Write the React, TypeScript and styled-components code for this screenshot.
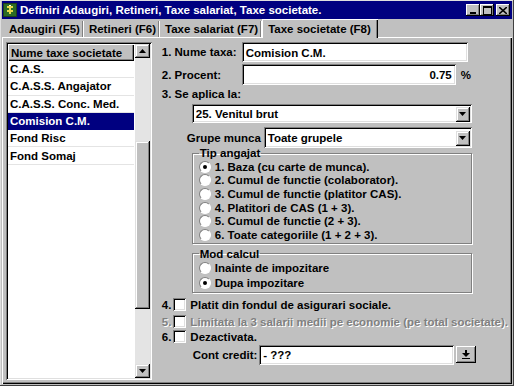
import React from "react";
import styled, { createGlobalStyle } from "styled-components";

const GlobalStyle = createGlobalStyle`
  html, body {
    margin: 0;
    padding: 0;
    background: #c0c0c0;
  }
  body {
    font-family: "Liberation Sans", Arial, sans-serif;
    font-size: 11.5px;
    font-weight: bold;
    color: #000;
  }
`;

const Window = styled.div`
  width: 514px;
  height: 386px;
  box-sizing: border-box;
  background: #c0c0c0;
  padding: 1px 2px 2px;
  display: flex;
  flex-direction: column;
  box-shadow: inset -1px -1px #404040, inset 1px 1px #dfdfdf;
`;

const TitleBar = styled.div`
  height: 18px;
  flex: none;
  background: #000080;
  color: #fff;
  display: flex;
  align-items: center;
  padding: 0 2px 0 1px;
  gap: 3px;
`;

const TitleText = styled.div`
  flex: 1;
  white-space: nowrap;
`;

const TitleButtons = styled.div`
  display: flex;
  align-items: center;
`;

const CaptionButton = styled.div<{ gapLeft?: number }>`
  width: 14px;
  height: 12px;
  margin-left: ${(p) => p.gapLeft ?? 0}px;
  background: #c0c0c0;
  box-shadow: inset -1px -1px #000, inset 1px 1px #fff, inset -2px -2px #808080;
  display: flex;
  align-items: center;
  justify-content: center;
`;

const TabRow = styled.div`
  height: 18px;
  flex: none;
  display: flex;
  align-items: flex-end;
  padding-left: 2px;
`;

const Tab = styled.div<{ active?: boolean }>`
  height: ${(p) => (p.active ? 19 : 16)}px;
  box-sizing: border-box;
  display: flex;
  align-items: center;
  padding: ${(p) => (p.active ? "0 7px 0 6px" : "0 4px 0 5px")};
  white-space: nowrap;
  position: relative;
  z-index: ${(p) => (p.active ? 1 : 0)};
  margin-bottom: ${(p) => (p.active ? -1 : 0)}px;
  background: #c0c0c0;
  box-shadow: ${(p) =>
    p.active
      ? "inset 1px 1px #fff, inset -1px 0 #000, inset -2px 0 #808080"
      : "inset -1px 0 #fff, inset -2px 0 #808080"};
`;

const Panel = styled.div`
  flex: 1;
  display: flex;
  padding: 5px 4px 4px 4px;
  box-shadow: inset 1px 1px #fff, inset -1px -1px #000, inset -2px -2px #808080;
`;

const ListBox = styled.div`
  width: 146px;
  height: 338px;
  box-sizing: border-box;
  padding: 2px;
  display: flex;
  background: #fff;
  box-shadow: inset 1px 1px #808080, inset -1px -1px #fff, inset 2px 2px #000, inset -2px -2px #dfdfdf;
`;

const ListItems = styled.div`
  flex: 1;
  display: flex;
  flex-direction: column;
`;

const ListHeader = styled.div`
  height: 17px;
  width: 126px;
  box-sizing: border-box;
  padding: 1px 0 0 3px;
  display: flex;
  align-items: center;
  white-space: nowrap;
  background: #c0c0c0;
  box-shadow: inset 1px 1px #fff, inset -1px -1px #000, inset -2px -2px #808080;
`;

const ListRow = styled.div<{ selected?: boolean }>`
  height: 17.3px;
  width: 126px;
  box-sizing: border-box;
  padding-left: 2px;
  display: flex;
  align-items: center;
  white-space: nowrap;
  background: ${(p) => (p.selected ? "#000080" : "#fff")};
  color: ${(p) => (p.selected ? "#fff" : "#000")};
  border-bottom: 1px solid ${(p) => (p.selected ? "#000080" : "#e4e4e4")};
`;

const ScrollBar = styled.div`
  width: 15px;
  display: flex;
  flex-direction: column;
  background: #e4e4e4;
`;

const ScrollButton = styled.div`
  width: 15px;
  height: 14px;
  flex: none;
  background: #c0c0c0;
  box-shadow: inset -1px -1px #000, inset 1px 1px #dfdfdf, inset -2px -2px #808080, inset 2px 2px #fff;
  display: flex;
  align-items: center;
  justify-content: center;
`;

const ScrollTrack = styled.div`
  flex: 1;
  display: flex;
  flex-direction: column;
`;

const ScrollThumb = styled.div<{ top: number; size: number }>`
  margin-top: ${(p) => p.top}px;
  height: ${(p) => p.size}px;
  background: #c0c0c0;
  box-shadow: inset -1px -1px #000, inset 1px 1px #dfdfdf, inset -2px -2px #808080, inset 2px 2px #fff;
`;

const Form = styled.div`
  flex: 1;
  display: flex;
  flex-direction: column;
  margin-left: 10px;
`;

const Row = styled.div<{ top?: number; indent?: number; h?: number }>`
  display: flex;
  align-items: center;
  margin-top: ${(p) => p.top ?? 0}px;
  margin-left: ${(p) => p.indent ?? 0}px;
  height: ${(p) => p.h ?? 20}px;
  white-space: nowrap;
`;

const Label = styled.div<{ w?: number; disabled?: boolean; gap?: number }>`
  width: ${(p) => (p.w ? `${p.w}px` : "auto")};
  margin-right: ${(p) => p.gap ?? 0}px;
  flex: none;
  color: ${(p) => (p.disabled ? "#808080" : "#000")};
  text-shadow: ${(p) => (p.disabled ? "1px 1px #fff" : "none")};
`;

const Field = styled.div<{ w: number; h?: number; align?: string }>`
  width: ${(p) => p.w}px;
  height: ${(p) => p.h ?? 20}px;
  flex: none;
  box-sizing: border-box;
  background: #fff;
  display: flex;
  align-items: center;
  justify-content: ${(p) => (p.align === "right" ? "flex-end" : "flex-start")};
  padding: 1px 4px 0 4px;
  box-shadow: inset 1px 1px #808080, inset -1px -1px #fff, inset 2px 2px #000, inset -2px -2px #dfdfdf;
`;

const Combo = styled(Field)`
  padding-right: 2px;
  justify-content: space-between;
`;

const ComboButton = styled.div`
  width: 14px;
  height: 15px;
  background: #c0c0c0;
  box-shadow: inset -1px -1px #000, inset 1px 1px #dfdfdf, inset -2px -2px #808080, inset 2px 2px #fff;
  display: flex;
  align-items: center;
  justify-content: center;
`;

const Percent = styled.span`
  margin-left: 5px;
`;

const Group = styled.fieldset<{ top?: number }>`
  margin: ${(p) => p.top ?? 0}px 0 0 30px;
  width: 280px;
  box-sizing: border-box;
  padding: 1px 0 1px 6px;
  border: 1px solid #808080;
  box-shadow: inset 1px 1px #fff, 1px 1px #fff;
`;

const Legend = styled.legend`
  padding: 0 1px;
  margin-left: 0;
  line-height: 12px;
`;

const Option = styled.div<{ h: number }>`
  height: ${(p) => p.h}px;
  display: flex;
  align-items: center;
  gap: 4px;
  white-space: nowrap;
`;

const RadioDot = styled.div<{ checked?: boolean }>`
  width: 12px;
  height: 12px;
  box-sizing: border-box;
  border-radius: 50%;
  background: #fff;
  border: 1px solid;
  border-color: #808080 #fff #fff #808080;
  display: flex;
  align-items: center;
  justify-content: center;

  &::after {
    content: "";
    width: 4px;
    height: 4px;
    border-radius: 50%;
    background: ${(p) => (p.checked ? "#000" : "transparent")};
  }
`;

const CheckBox = styled.div`
  width: 13px;
  height: 13px;
  box-sizing: border-box;
  background: #fff;
  margin: 0 4px 0 2px;
  box-shadow: inset 1px 1px #808080, inset -1px -1px #fff, inset 2px 2px #000, inset -2px -2px #dfdfdf;
`;

const SmallButton = styled.div`
  width: 20px;
  height: 17px;
  margin-left: 2px;
  background: #c0c0c0;
  box-shadow: inset -1px -1px #000, inset 1px 1px #fff, inset -2px -2px #808080;
  display: flex;
  align-items: center;
  justify-content: center;
`;

const Arrow = ({ up }: { up?: boolean }) => (
  <svg width="7" height="4" viewBox="0 0 7 4">
    <path d={up ? "M3.5 0L7 4H0Z" : "M0 0H7L3.5 4Z"} fill="#000" />
  </svg>
);

const AppIcon = () => (
  <svg width="14" height="14" viewBox="0 0 14 14">
    <rect x="0" y="0" width="14" height="14" fill="#1f3d1a" />
    <rect x="1" y="1" width="12" height="12" fill="#2c6b25" />
    <path d="M4 3h6v2H8v2h2v2H8v2H6V9H4V7h2V5H4z" fill="#e8d84a" />
    <rect x="6" y="2" width="2" height="1" fill="#fff" />
  </svg>
);

const taxe = ["C.A.S.", "C.A.S.S. Angajator", "C.A.S.S. Conc. Med.", "Comision C.M.", "Fond Risc", "Fond Somaj"];

const tipuri = [
  "1. Baza (cu carte de munca).",
  "2. Cumul de functie (colaborator).",
  "3. Cumul de functie (platitor CAS).",
  "4. Platitori de CAS (1 + 3).",
  "5. Cumul de functie (2 + 3).",
  "6. Toate categoriile (1 + 2 + 3).",
];

const App = () => {
  return (
    <>
      <GlobalStyle />
      <Window>
        <TitleBar>
          <AppIcon />
          <TitleText>Definiri Adaugiri, Retineri, Taxe salariat, Taxe societate.</TitleText>
          <TitleButtons>
            <CaptionButton>
              <svg width="8" height="8" viewBox="0 0 8 8">
                <rect x="1" y="6" width="6" height="2" fill="#000" />
              </svg>
            </CaptionButton>
            <CaptionButton>
              <svg width="9" height="9" viewBox="0 0 9 9">
                <path d="M0 0h9v9H0z M1 2v6h7V2z" fill="#000" fillRule="evenodd" />
              </svg>
            </CaptionButton>
            <CaptionButton gapLeft={2}>
              <svg width="8" height="7" viewBox="0 0 8 7">
                <path d="M0 0L8 7M8 0L0 7" stroke="#000" strokeWidth="1.6" />
              </svg>
            </CaptionButton>
          </TitleButtons>
        </TitleBar>

        <TabRow>
          <Tab>Adaugiri (F5)</Tab>
          <Tab>Retineri (F6)</Tab>
          <Tab>Taxe salariat (F7)</Tab>
          <Tab active>Taxe societate (F8)</Tab>
        </TabRow>

        <Panel>
          <ListBox>
            <ListItems>
              <ListHeader>Nume taxe societate</ListHeader>
              {taxe.map((t, i) => (
                <ListRow key={t} selected={i === 3}>
                  {t}
                </ListRow>
              ))}
            </ListItems>
            <ScrollBar>
              <ScrollButton>
                <Arrow up />
              </ScrollButton>
              <ScrollTrack>
                <ScrollThumb top={83} size={168} />
              </ScrollTrack>
              <ScrollButton>
                <Arrow />
              </ScrollButton>
            </ScrollBar>
          </ListBox>

          <Form>
            <Row h={20}>
              <Label w={80}>1. Nume taxa:</Label>
              <Field w={226}>Comision C.M.</Field>
            </Row>
            <Row top={2} h={21}>
              <Label w={80}>2. Procent:</Label>
              <Field w={214} h={21} align="right">
                0.75
              </Field>
              <Percent>%</Percent>
            </Row>
            <Row top={2} h={14}>
              <Label>3. Se aplica la:</Label>
            </Row>
            <Row top={3} indent={30} h={19}>
              <Combo w={280} h={19}>
                <span>25. Venitul brut</span>
                <ComboButton>
                  <Arrow />
                </ComboButton>
              </Combo>
            </Row>
            <Row top={4} indent={25} h={21}>
              <Label w={77}>Grupe munca</Label>
              <Combo w={208} h={21}>
                <span>Toate grupele</span>
                <ComboButton>
                  <Arrow />
                </ComboButton>
              </Combo>
            </Row>
            <Group top={-1}>
              <Legend>Tip angajat</Legend>
              {tipuri.map((t, i) => (
                <Option key={t} h={13.6}>
                  <RadioDot checked={i === 0} />
                  {t}
                </Option>
              ))}
            </Group>
            <Group top={4}>
              <Legend>Mod calcul</Legend>
              <Option h={15}>
                <RadioDot />
                Inainte de impozitare
              </Option>
              <Option h={15}>
                <RadioDot checked />
                Dupa impozitare
              </Option>
            </Group>
            <Row top={4} h={16}>
              <Label>4.</Label>
              <CheckBox />
              <Label>Platit din fondul de asigurari sociale.</Label>
            </Row>
            <Row top={1} h={16}>
              <Label disabled>5.</Label>
              <CheckBox />
              <Label disabled>Limitata la 3 salarii medii pe economie (pe total societate).</Label>
            </Row>
            <Row h={14}>
              <Label>6.</Label>
              <CheckBox />
              <Label>Dezactivata.</Label>
            </Row>
            <Row top={1} indent={31} h={20}>
              <Label gap={2}>Cont credit:</Label>
              <Field w={195}>- ???</Field>
              <SmallButton>
                <svg width="8" height="9" viewBox="0 0 8 9">
                  <path d="M3 0h2v3h3L4 7 0 3h3z" fill="#000" />
                  <rect x="0" y="8" width="8" height="1" fill="#000" />
                </svg>
              </SmallButton>
            </Row>
          </Form>
        </Panel>
      </Window>
    </>
  );
};

export default App;
